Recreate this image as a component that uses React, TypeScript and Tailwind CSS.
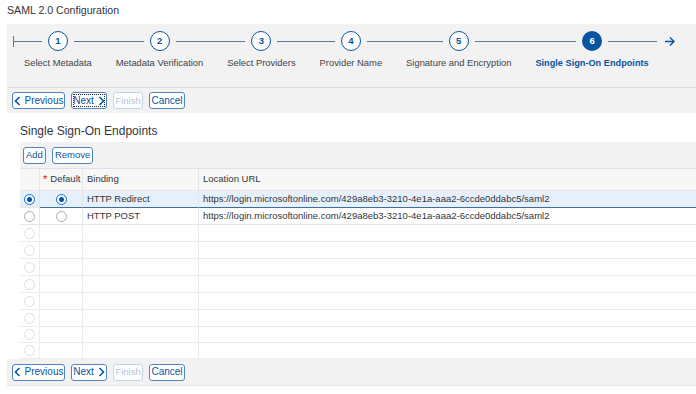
import React from "react";

const steps = [
  "Select Metadata",
  "Metadata Verification",
  "Select Providers",
  "Provider Name",
  "Signature and Encryption",
  "Single Sign-On Endpoints",
];

const url = "https://login.microsoftonline.com/429a8eb3-3210-4e1a-aaa2-6ccde0ddabc5/saml2";

function ChevLeft() {
  return (
    <svg width="7" height="10" viewBox="0 0 7 10" className="shrink-0">
      <path d="M5.5 1 L1.5 5 L5.5 9" fill="none" stroke="#0854a0" strokeWidth="1.6" />
    </svg>
  );
}
function ChevRight() {
  return (
    <svg width="7" height="10" viewBox="0 0 7 10" className="shrink-0">
      <path d="M1.5 1 L5.5 5 L1.5 9" fill="none" stroke="#0854a0" strokeWidth="1.6" />
    </svg>
  );
}

function NavButtons({ focused }: { focused?: boolean }) {
  return (
    <div className="flex items-center gap-[6px] pl-[5px] h-full">
      <button className="h-[17px] w-[53px] flex items-center justify-center gap-[4px] bg-white border border-[#4d86c2] rounded-[3px] text-[10px] text-[#0854a0] leading-none">
        <ChevLeft />
        <span>Previous</span>
      </button>
      <button
        className={
          focused
            ? "h-[17px] w-[36px] flex items-center justify-center gap-[4px] bg-white border border-[#4d86c2] rounded-[3px] text-[10px] text-[#0854a0] leading-none outline-1 outline-dotted outline-[#222] outline-offset-[-3px]"
            : "h-[17px] w-[36px] flex items-center justify-center gap-[4px] bg-white border border-[#4d86c2] rounded-[3px] text-[10px] text-[#0854a0] leading-none"
        }
      >
        <span>Next</span>
        <ChevRight />
      </button>
      <button className="h-[17px] w-[30px] flex items-center justify-center bg-white border border-[#c3d3e4] rounded-[3px] text-[9.5px] text-[#b3c6da] leading-none">
        Finish
      </button>
      <button className="h-[17px] w-[36px] flex items-center justify-center bg-white border border-[#4d86c2] rounded-[3px] text-[10px] text-[#0854a0] leading-none">
        Cancel
      </button>
    </div>
  );
}

function Radio({ checked, faded }: { checked?: boolean; faded?: boolean }) {
  if (checked) {
    return (
      <span className="w-[11px] h-[11px] rounded-full border border-[#0a6ed1] bg-white flex items-center justify-center">
        <span className="w-[5px] h-[5px] rounded-full bg-[#0854a0]" />
      </span>
    );
  }
  return (
    <span
      className={
        faded
          ? "w-[11px] h-[11px] rounded-full border border-[#dcdfe2] bg-white"
          : "w-[11px] h-[11px] rounded-full border border-[#a3a9af] bg-white"
      }
    />
  );
}

export default function App() {
  const rows = [
    { binding: "HTTP Redirect", url, selected: true },
    { binding: "HTTP POST", url, selected: false },
  ];
  const empty = [17, 17, 17, 17, 17, 17, 16, 16];
  return (
    <div className="w-[696px] h-[394px] bg-white overflow-hidden text-[#32363a] font-['Liberation_Sans',Arial,sans-serif]">
      <div className="h-[24px] pl-[7px] pt-[4px] text-[10.6px] leading-[12px]">SAML 2.0 Configuration</div>

      <div className="ml-[7px] bg-[#f2f2f2]">
        <div className="h-[64px] relative border-b border-[#dcdcdc]">
          {/* progress line */}
          <div className="absolute left-[6px] top-[17px] w-[644px] h-px bg-[#5b7a99]" />
          <div className="absolute left-[6px] top-[12px] w-px h-[11px] bg-[#5b7a99]" />
          <svg className="absolute left-[657px] top-[12px]" width="12" height="11" viewBox="0 0 12 11">
            <path d="M1 5.5 H10 M6 1.5 L10 5.5 L6 9.5" fill="none" stroke="#0854a0" strokeWidth="1.4" />
          </svg>
          <div className="flex gap-[24px] pl-[17px] pt-[7px]">
            {steps.map((s, i) => {
              const active = i === 5;
              return (
                <div key={s} className="flex flex-col items-center">
                  <div
                    className={
                      active
                        ? "relative w-[20px] h-[20px] rounded-full bg-[#0854a0] text-white text-[9.5px] font-bold flex items-center justify-center shadow-[0_0_0_6px_#f2f2f2]"
                        : "relative w-[20px] h-[20px] rounded-full bg-white border border-[#0854a0] text-[#0854a0] text-[9.5px] font-bold flex items-center justify-center shadow-[0_0_0_6px_#f2f2f2]"
                    }
                  >
                    {i + 1}
                  </div>
                  <div
                    className={
                      active
                        ? "mt-[6px] text-[9.2px] leading-[12px] font-bold text-[#0854a0] whitespace-nowrap"
                        : "mt-[6px] text-[9.4px] leading-[12px] text-[#3f4347] whitespace-nowrap"
                    }
                  >
                    {s}
                  </div>
                </div>
              );
            })}
          </div>
        </div>
        <div className="h-[25px]">
          <NavButtons focused />
        </div>
      </div>

      <div className="h-[29px] pl-[20px] pt-[11px] text-[12px] leading-[15px]">Single Sign-On Endpoints</div>

      <div className="ml-[20px]">
        <div className="h-[27px] bg-[#f2f2f2] border-b border-[#e0e0e0] flex items-center gap-[6px] pl-[3px]">
          <button className="h-[17px] px-[2px] bg-white border border-[#4d86c2] rounded-[3px] text-[9.5px] text-[#0854a0] leading-none">
            Add
          </button>
          <button className="h-[17px] px-[2px] bg-white border border-[#4d86c2] rounded-[3px] text-[9.5px] text-[#0854a0] leading-none">
            Remove
          </button>
        </div>

        <div className="grid grid-cols-[20px_43px_116px_1fr] text-[9.5px]">
          {/* header */}
          <div className="h-[22px] bg-[#f7f7f7] border-b border-r border-[#e5e5e5]" />
          <div className="h-[22px] bg-[#f7f7f7] border-b border-r border-[#e5e5e5] flex items-center pl-[3px] whitespace-nowrap">
            <span className="text-[#e00] mr-[3px] text-[11px] leading-none">*</span>Default
          </div>
          <div className="h-[22px] bg-[#f7f7f7] border-b border-r border-[#e5e5e5] flex items-center pl-[4px]">Binding</div>
          <div className="h-[22px] bg-[#f7f7f7] border-b border-[#e5e5e5] flex items-center pl-[4px]">Location URL</div>

          {rows.map((r) => (
            <React.Fragment key={r.binding}>
              <div
                className={
                  r.selected
                    ? "h-[17px] bg-[#e5f0fa] border-b border-r border-[#e5e5e5] flex items-center justify-center"
                    : "h-[17px] bg-white border-b border-r border-[#e5e5e5] flex items-center justify-center"
                }
              >
                <Radio checked={r.selected} />
              </div>
              <div
                className={
                  r.selected
                    ? "h-[17px] bg-[#e5f0fa] border-b border-b-[#3d6e9e] border-r border-r-[#e5e5e5] flex items-center justify-center"
                    : "h-[17px] bg-white border-b border-r border-[#e5e5e5] flex items-center justify-center"
                }
              >
                <Radio checked={r.selected} />
              </div>
              <div
                className={
                  r.selected
                    ? "h-[17px] bg-[#e5f0fa] border-b border-b-[#3d6e9e] border-r border-r-[#e5e5e5] flex items-center pl-[4px] whitespace-nowrap"
                    : "h-[17px] bg-white border-b border-r border-[#e5e5e5] flex items-center pl-[4px] whitespace-nowrap"
                }
              >
                {r.binding}
              </div>
              <div
                className={
                  r.selected
                    ? "h-[17px] bg-[#e5f0fa] border-b border-b-[#3d6e9e] flex items-center pl-[4px] whitespace-nowrap"
                    : "h-[17px] bg-white border-b border-[#e5e5e5] flex items-center pl-[4px] whitespace-nowrap"
                }
              >
                {r.url}
              </div>
            </React.Fragment>
          ))}

          {empty.map((h, i) => {
            const hc = h === 17 ? "h-[17px]" : "h-[16px]";
            return (
              <React.Fragment key={i}>
                <div className={hc + " border-b border-r border-[#ececec] flex items-center justify-center"}>
                  <Radio faded />
                </div>
                <div className={hc + " border-b border-r border-[#ececec]"} />
                <div className={hc + " border-b border-r border-[#ececec]"} />
                <div className={hc + " border-b border-[#ececec]"} />
              </React.Fragment>
            );
          })}
        </div>
      </div>

      <div className="ml-[7px] h-[27px] bg-[#f2f2f2] border-b border-[#e8e8e8]">
        <NavButtons />
      </div>
    </div>
  );
}
